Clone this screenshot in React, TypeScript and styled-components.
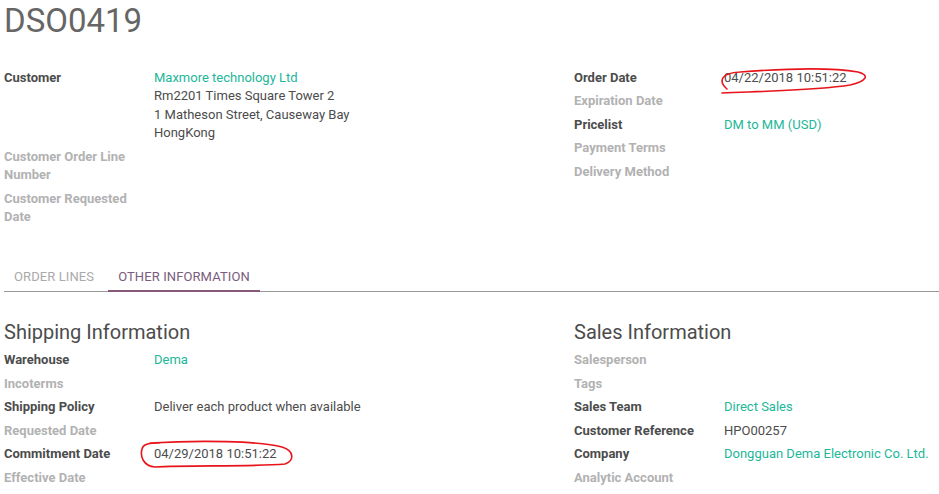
import React from "react";
import styled, { createGlobalStyle } from "styled-components";

const Global = createGlobalStyle`
  html, body { margin: 0; padding: 0; background: #fff; }
  body { font-family: Roboto, "Noto Sans", sans-serif; font-size: 13px; color: #4c4c4c; }
`;

const Sheet = styled.div`
  width: 939px;
  padding-left: 4px;
  box-sizing: border-box;
`;

const Title = styled.h1`
  margin: 0;
  font-size: 33px;
  line-height: 42px;
  font-weight: 400;
  color: #666;
`;

const Groups = styled.div<{ $top: number }>`
  display: grid;
  grid-template-columns: 570px 1fr;
  margin-top: ${(p) => p.$top}px;
`;

const Group = styled.div`
  display: flex;
  flex-direction: column;
`;

const Row = styled.div`
  display: grid;
  grid-template-columns: 150px 1fr;
  padding: 2.5px 0;
  line-height: 18.5px;
`;

const Label = styled.div<{ $muted?: boolean }>`
  font-weight: 700;
  color: ${(p) => (p.$muted ? "#b2b2b2" : "#4c4c4c")};
  padding-right: 14px;
`;

const Value = styled.div<{ $link?: boolean }>`
  position: relative;
  color: ${(p) => (p.$link ? "#21b799" : "#4c4c4c")};
`;

const Scribble = styled.svg<{ $left: number; $top: number }>`
  position: absolute;
  left: ${(p) => p.$left}px;
  top: ${(p) => p.$top}px;
  overflow: visible;
  pointer-events: none;
`;

const Tabs = styled.div`
  display: flex;
  gap: 4px;
  margin-top: 28px;
  border-bottom: 1px solid #999;
`;

const Tab = styled.div<{ $active?: boolean }>`
  padding: 11px 10px 3px;
  line-height: 18.5px;
  letter-spacing: 0.1px;
  text-transform: uppercase;
  color: ${(p) => (p.$active ? "#7a5c7e" : "#aaa")};
  border-bottom: 2px solid ${(p) => (p.$active ? "#875a7b" : "transparent")};
  margin-bottom: -1px;
`;

const SectionTitle = styled.h2`
  margin: 0 0 3px;
  font-size: 20px;
  line-height: 28px;
  font-weight: 400;
  color: #4c4c4c;
`;

type F = { label: string; value?: React.ReactNode; link?: boolean };

const Field = ({ label, value, link }: F) => (
  <Row>
    <Label $muted={value === undefined}>{label}</Label>
    <Value $link={link}>{value}</Value>
  </Row>
);

const Circle = ({ vb, left, top, d }: { vb: [number, number, number, number]; left: number; top: number; d: string }) => (
  <Scribble
    $left={left}
    $top={top}
    width={vb[2]}
    height={vb[3]}
    viewBox={vb.join(" ")}
  >
    <path d={d} fill="none" stroke="#e8141b" strokeWidth={1.6} strokeLinecap="round" strokeLinejoin="round" />
  </Scribble>
);

export default function App() {
  return (
    <>
      <Global />
      <Sheet>
        <Title>DSO0419</Title>
        <Groups $top={24}>
          <Group>
            <Field
              label="Customer"
              value={
                <>
                  <div style={{ color: "#21b799" }}>Maxmore technology Ltd</div>
                  <div>Rm2201 Times Square Tower 2</div>
                  <div>1 Matheson Street, Causeway Bay</div>
                  <div>HongKong</div>
                </>
              }
            />
            <Field label="Customer Order Line Number" />
            <Field label="Customer Requested Date" />
          </Group>
          <Group>
            <Row>
              <Label>Order Date</Label>
              <Value>
                04/22/2018 10:51:22
                <Circle
                  vb={[714, 56, 160, 40]}
                  left={-10}
                  top={-12}
                  d="M727 88 C718 80 721 72 740 71 C780 68 830 66 858 71 C870 74 867 80 850 84 C820 89 770 90 722 92"
                />
              </Value>
            </Row>
            <Field label="Expiration Date" />
            <Field label="Pricelist" value="DM to MM (USD)" link />
            <Field label="Payment Terms" />
            <Field label="Delivery Method" />
          </Group>
        </Groups>

        <Tabs>
          <Tab>Order Lines</Tab>
          <Tab $active>Other Information</Tab>
        </Tabs>

        <Groups $top={26}>
          <Group>
            <SectionTitle>Shipping Information</SectionTitle>
            <Field label="Warehouse" value="Dema" link />
            <Field label="Incoterms" />
            <Field label="Shipping Policy" value="Deliver each product when available" />
            <Field label="Requested Date" />
            <Row>
              <Label>Commitment Date</Label>
              <Value>
                04/29/2018 10:51:22
                <Circle
                  vb={[134, 432, 165, 40]}
                  left={-20}
                  top={-12}
                  d="M150 442 C200 439 260 440 282 446 C295 450 294 460 285 463 C250 466 190 464 155 466 C143 465 140 455 142 448 C143 444 146 442 160 442"
                />
              </Value>
            </Row>
            <Field label="Effective Date" />
          </Group>
          <Group>
            <SectionTitle>Sales Information</SectionTitle>
            <Field label="Salesperson" />
            <Field label="Tags" />
            <Field label="Sales Team" value="Direct Sales" link />
            <Field label="Customer Reference" value="HPO00257" />
            <Field label="Company" value="Dongguan Dema Electronic Co. Ltd." link />
            <Field label="Analytic Account" />
          </Group>
        </Groups>
      </Sheet>
    </>
  );
}
